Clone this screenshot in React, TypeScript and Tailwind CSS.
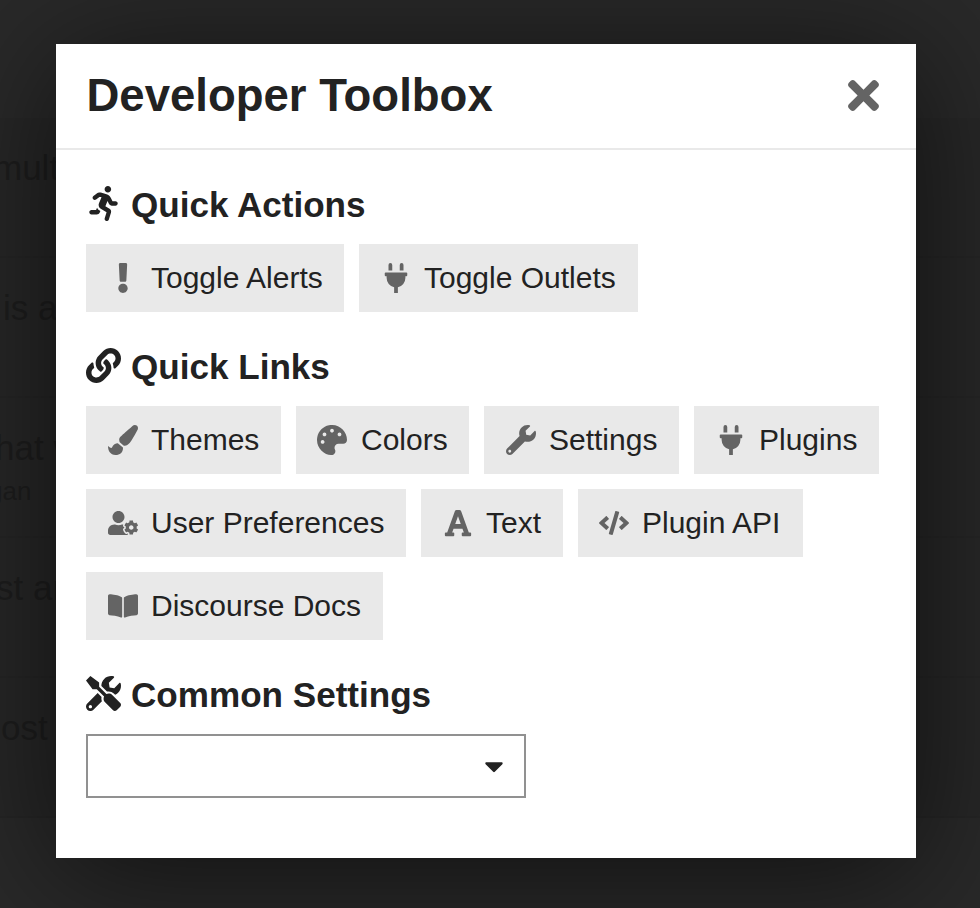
import type { ReactNode } from "react";
import type { IconType } from "react-icons";
import {
  FaBookOpen,
  FaCaretDown,
  FaCode,
  FaExclamation,
  FaFont,
  FaLink,
  FaPaintBrush,
  FaPalette,
  FaPlug,
  FaRunning,
  FaTimes,
  FaTools,
  FaUserCog,
  FaWrench,
} from "react-icons/fa";

type Action = { label: string; icon: IconType; box: string };

const actions: Action[] = [
  { label: "Toggle Alerts", icon: FaExclamation, box: "w-[258px] pl-[22px] gap-[13px]" },
  { label: "Toggle Outlets", icon: FaPlug, box: "w-[279px] pl-[22px] gap-[13px]" },
];

const links: Action[] = [
  { label: "Themes", icon: FaPaintBrush, box: "w-[195px] pl-[22px] gap-[13px]" },
  { label: "Colors", icon: FaPalette, box: "w-[173px] pl-[21px] gap-[14px]" },
  { label: "Settings", icon: FaWrench, box: "w-[195px] pl-[22px] gap-[13px]" },
  { label: "Plugins", icon: FaPlug, box: "w-[185px] pl-[22px] gap-[13px]" },
  { label: "User Preferences", icon: FaUserCog, box: "w-[320px] pl-[22px] gap-[13px]" },
  { label: "Text", icon: FaFont, box: "w-[142px] pl-[22px] gap-[13px]" },
  { label: "Plugin API", icon: FaCode, box: "w-[225px] pl-[21px] gap-[13px]" },
  { label: "Discourse Docs", icon: FaBookOpen, box: "w-[297px] pl-[22px] gap-[13px]" },
];

const topics = [
  { title: "mult", indent: "-ml-[7px]" },
  { title: "is a", indent: "ml-[3px]" },
  { title: "hat w", indent: "-ml-[5px]", author: "gan" },
  { title: "st an", indent: "-ml-[4px]" },
  { title: "ost", indent: "ml-[1px]" },
];

function ToolButton({ label, icon: Icon, box }: Action) {
  return (
    <button
      className={`flex h-[68px] shrink-0 items-center whitespace-nowrap bg-[#e9e9e9] text-[30px] leading-[36px] text-[#222222] ${box}`}
    >
      <Icon className="size-[30px] shrink-0 text-[#646464]" />
      {label}
    </button>
  );
}

function Heading({ icon: Icon, children }: { icon: IconType; children: ReactNode }) {
  return (
    <h3 className="flex h-[42px] items-center gap-[10px] text-[35.1px] font-bold leading-[42px]">
      <Icon className="mb-[4px] size-[35px] shrink-0" />
      <span>{children}</span>
    </h3>
  );
}

export default function App() {
  return (
    <div className="relative h-[908px] w-[980px] overflow-hidden bg-[#292929] font-['Liberation_Sans',Arial,sans-serif] text-[#222222]">
      <div className="h-[118px]" />
      <div className="bg-[#272727]">
        {topics.map((topic) => (
          <div key={topic.title} className="h-[140px] border-b-2 border-[#252525] pt-[30px] text-[#1d1d1d]">
            <div className={`whitespace-nowrap text-[35px] leading-[40px] ${topic.indent}`}>{topic.title}</div>
            {topic.author && <div className="-ml-[12px] mt-[8px] text-[26px] leading-[30px]">{topic.author}</div>}
          </div>
        ))}
      </div>

      <div
        role="dialog"
        className="absolute left-[56px] top-[44px] h-[814px] w-[860px] bg-white shadow-[0_16px_120px_rgba(0,0,0,0.6)]"
      >
        <header className="flex h-[106px] items-center justify-between border-b-2 border-[#e9e9e9] pl-[30.5px] pr-[22px]">
          <h1 className="text-[45.5px] font-bold leading-[54px]">Developer Toolbox</h1>
          <button aria-label="Close" className="flex size-[60px] items-center justify-center pb-px pr-px text-[#646464]">
            <FaTimes className="size-[45px]" />
          </button>
        </header>
        <div className="pl-[30px] pt-[34px]">
          <Heading icon={FaRunning}>Quick Actions</Heading>
          <div className="mt-[18px] flex gap-[15px]">
            {actions.map((a) => (
              <ToolButton key={a.label} {...a} />
            ))}
          </div>
          <div className="mt-[34px]">
            <Heading icon={FaLink}>Quick Links</Heading>
          </div>
          <div className="mt-[18px] flex w-[800px] flex-wrap gap-[15px]">
            {links.map((a) => (
              <ToolButton key={a.label} {...a} />
            ))}
          </div>
          <div className="mt-[34px]">
            <Heading icon={FaTools}>Common Settings</Heading>
          </div>
          <div className="mt-[18px] flex h-[64px] w-[440px] items-center justify-end border-2 border-[#919191] pr-[15px]">
            <FaCaretDown className="size-[30px]" />
          </div>
        </div>
      </div>
    </div>
  );
}
